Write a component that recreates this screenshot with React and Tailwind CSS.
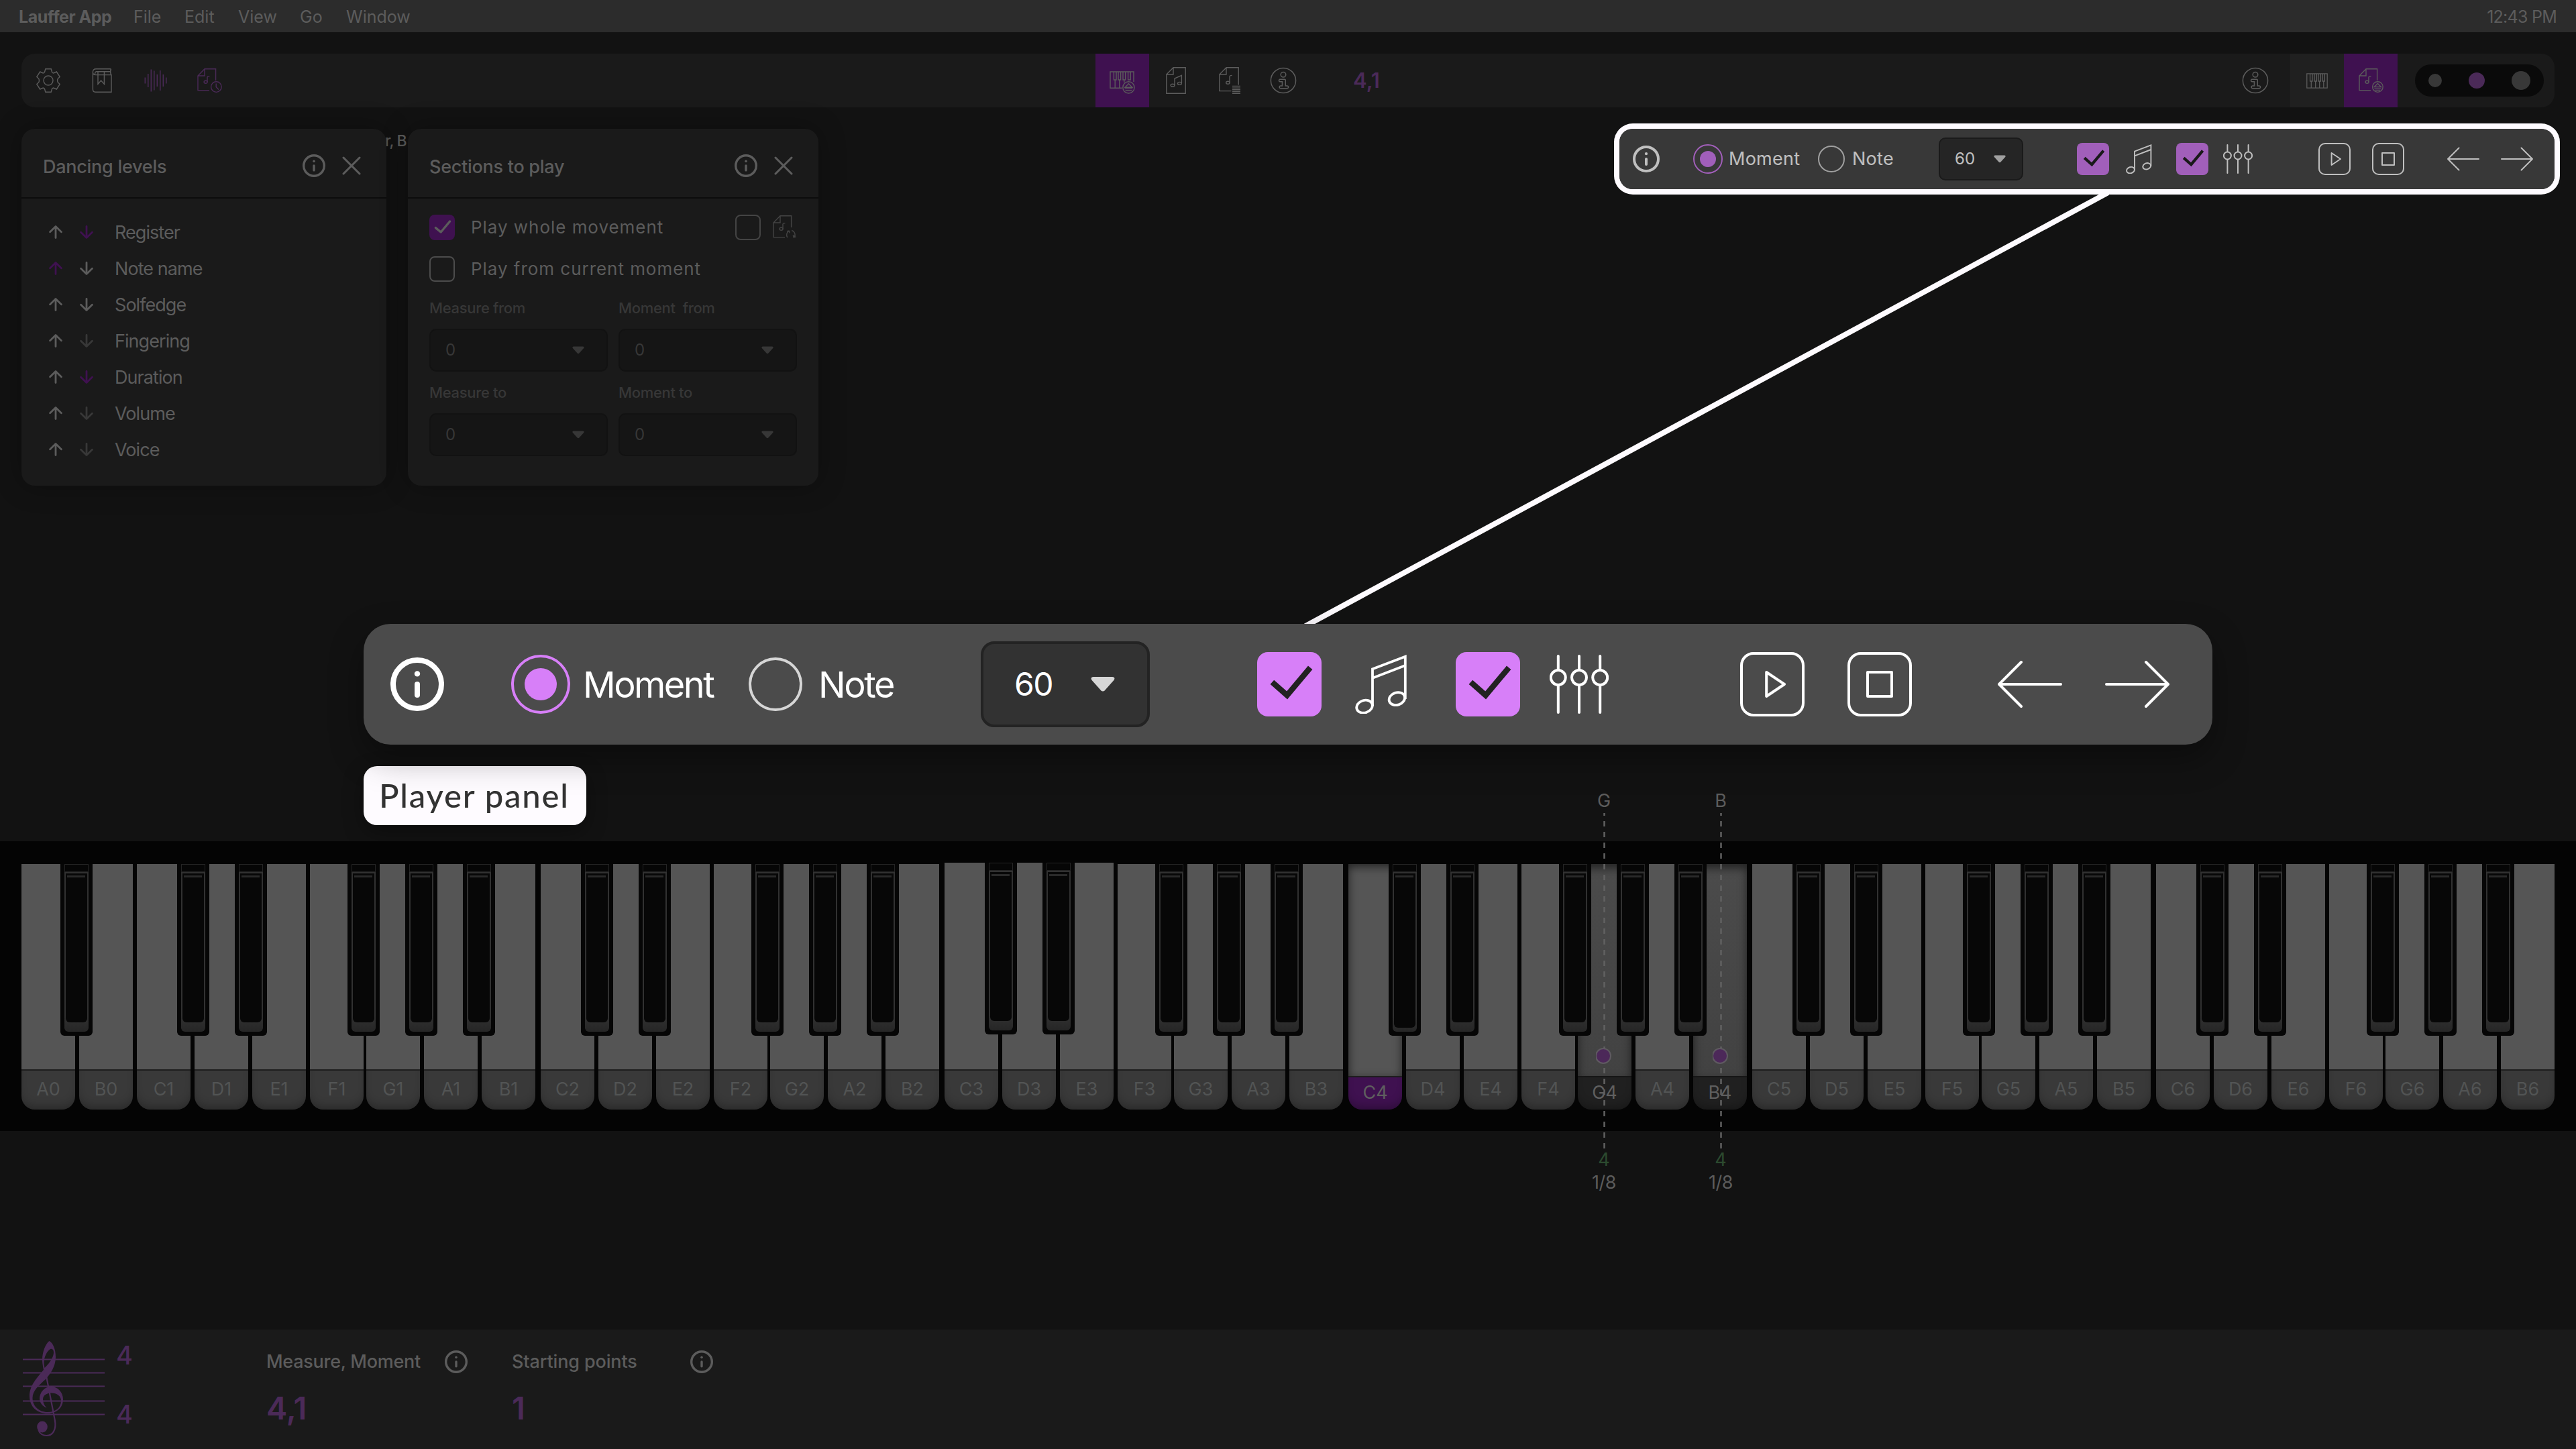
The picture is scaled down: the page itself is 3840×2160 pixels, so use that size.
import clsx from "clsx";

const levels = [
  { name: "Register", up: "text-[#5c5c5c]", down: "text-[#3f1150]" },
  { name: "Note name", up: "text-[#3f1150]", down: "text-[#5c5c5c]" },
  { name: "Solfedge", up: "text-[#5c5c5c]", down: "text-[#5c5c5c]" },
  { name: "Fingering", up: "text-[#5c5c5c]", down: "text-[#383838]" },
  { name: "Duration", up: "text-[#5c5c5c]", down: "text-[#3f1150]" },
  { name: "Volume", up: "text-[#5c5c5c]", down: "text-[#383838]" },
  { name: "Voice", up: "text-[#5c5c5c]", down: "text-[#383838]" },
];

// space after each white key
const keyMargin = { C: "mr-1.5", D: "mr-1.5", E: "mr-1.5", F: "mr-1", G: "mr-1.5", A: "mr-1.5", B: "mr-2" };
// where the sharp sits on the white key below it
const sharpLeft = { C: "left-[60px]", D: "left-[60px]", F: "left-[56px]", G: "left-[58px]", A: "left-[58px]" };

const pianoKeys = [
  { note: "A", octave: 0 },
  { note: "B", octave: 0 },
  ...[1, 2, 3, 4, 5, 6].flatMap((octave) => ["C", "D", "E", "F", "G", "A", "B"].map((note) => ({ note, octave }))),
];

/* ---------- Icons ---------- */

function Info({ className }) {
  return (
    <svg viewBox="0 0 40 40" className={clsx("shrink-0", className)} fill="none" stroke="currentColor" strokeWidth="4" strokeLinecap="round">
      <circle cx="20" cy="20" r="18" />
      <path d="M20 20v8" />
      <circle cx="20" cy="12.2" r="2.1" fill="currentColor" stroke="none" />
    </svg>
  );
}

function InfoOutline() {
  return (
    <svg viewBox="0 0 40 40" className="w-10 h-10" fill="none" stroke="currentColor" strokeWidth="1.5">
      <circle cx="20" cy="20" r="18.6" />
      <circle cx="20" cy="11.2" r="3.8" />
      <path d="M15 18.2h7a1.3 1.3 0 0 1 1.3 1.3v8.6h2.4a1.7 1.7 0 0 1 0 3.6H16a1.7 1.7 0 0 1 0-3.6h2.4v-6.4H15.5a1.7 1.7 0 0 1-.5-3.5z" />
    </svg>
  );
}

function Gear() {
  return (
    <svg viewBox="0 0 36 36" className="w-9 h-9" fill="none" stroke="currentColor" strokeWidth="1.4">
      <path d="M13.8.8H22.2L23.5 5.5Q24 6.6 25.8 7L30.3 5L35.2 12.5L32.2 15.3Q31 18 32.2 20.7L35.2 23.5L30.3 31L25.8 29Q24 29.4 23.5 30.5L22.2 35.2H13.8L12.5 30.5Q12 29.4 10.2 29L5.7 31L.8 23.5L3.8 20.7Q5 18 3.8 15.3L.8 12.5L5.7 5L10.2 7Q12 6.6 12.5 5.5Z" />
      <circle cx="18" cy="18" r="7" />
    </svg>
  );
}

function Book() {
  return (
    <svg viewBox="0 0 36 36" className="w-9 h-9" fill="none" stroke="currentColor" strokeWidth="1.4">
      <path d="M31.5.8H9Q4.4.8 4.4 5.5V31Q4.4 35.2 8 35.2H32V9.6H8.5Q4.8 9.6 4.4 6M31.5.8Q29.8 5 31.5 9.6M31 4.8H9.5Q7.6 5 7.4 9.4" />
      <path d="M12 4.8V23.4L16.6 18L21.4 23.4V4.8" />
    </svg>
  );
}

function Waves() {
  return (
    <svg viewBox="0 0 36 36" className="w-9 h-9" fill="none" stroke="currentColor" strokeWidth="1.5">
      <path d="M2.3 13.6v8.8M6.8 8v20M11.3 1.5v33M15.8 3.5v29M20.3 9v18M24.8 3v30M29.3 9v18M33.8 13.6v8.8" />
    </svg>
  );
}

// Score sheet with a badge in the lower right corner
function Sheet({ badge }) {
  return (
    <svg viewBox="0 0 36 36" className="w-9 h-9 overflow-visible" fill="none" stroke="currentColor" strokeWidth="1.4">
      <path d="M18 32.6H1V11L11 .8H27.6V18M1 11H11V.8" />
      <path d="M15 20V13.2Q15.2 11.6 18.4 11.6" />
      <ellipse cx="12.6" cy="20.2" rx="2.5" ry="2" />
      {badge === "clock" && (
        <>
          <circle cx="28.4" cy="27.6" r="7.8" />
          <path d="M28.2 22.6V27.6L32 31.6" />
        </>
      )}
      {badge === "eject" && (
        <>
          <circle cx="28.4" cy="27.6" r="7.8" />
          <path d="M28.4 22.6L33.4 27.6H23.4ZM23.4 30.4H33.4M24.8 32.4h7.2" />
        </>
      )}
      {badge === "loop" && (
        <path d="M20.2 33.4a6.6 6.6 0 0 1 2-9.4M19.6 24.2l3.4-.8M23 23.4l.4 3.4M26.6 22.9a6.6 6.6 0 0 1 4 9.8M32.8 32.4l-3.6.8M29.2 33.2l-.4-3.6" transform="translate(1.6 -.4)" />
      )}
    </svg>
  );
}

function SheetNotes() {
  return (
    <svg viewBox="0 0 30 40" className="w-[30px] h-10" fill="none" stroke="currentColor" strokeWidth="1.4">
      <path d="M.8 11L11 .8H29.2V39.2H.8ZM.8 11H11V.8" />
      <path d="M13 27V17L23.4 12.4V24" />
      <ellipse cx="10" cy="27.2" rx="2.9" ry="2" />
      <ellipse cx="20.4" cy="24.4" rx="2.9" ry="2" />
    </svg>
  );
}

function SheetList() {
  return (
    <svg viewBox="0 0 32 40" className="w-8 h-10" fill="none" stroke="currentColor" strokeWidth="1.4">
      <path d="M18.5 35.6H.8V11L11 .8H29.2V26.4M.8 11H11V.8" />
      <path d="M16 23V14Q16.2 12.4 19.6 12.4" />
      <ellipse cx="13.4" cy="23.2" rx="2.7" ry="2" />
      <path d="M20 28.4h12M20 31.1h12M20 33.8h12M20 36.5h12M20 39.2h12" />
    </svg>
  );
}

function Piano() {
  return (
    <svg viewBox="0 0 32 23" className="w-8 h-[23px]" fill="none" stroke="currentColor" strokeWidth="1.3">
      <path d="M.8.8H31.2V22.2H.8ZM5.6.8V12H9V.8M12 .8V12H15.4V.8M18 .8V12H21.4V.8M24.2 .8V12H27.4V.8M7.3 12V22M13.7 12V22M19.7 12V22M25.8 12V22" />
    </svg>
  );
}

function PianoEject() {
  return (
    <svg viewBox="0 0 38 34" className="w-[38px] h-[34px]" fill="none" stroke="currentColor" strokeWidth="1.4">
      <path d="M18.6 25.2H1V1H36V16M6.4 1V13H10V1M13 1V13H16.6V1M20 1V13H23.6V1M27.6 1V13H31.2V1M8.2 13V25M14.8 13V25M21.8 13V17" />
      <circle cx="28.4" cy="24.4" r="8.6" />
      <path d="M28.4 18.8L33.8 24.2H23ZM22.6 26.4H34.2M23.6 28.6H33.2" />
    </svg>
  );
}

function Close() {
  return (
    <svg viewBox="0 0 28 28" className="w-7 h-7" fill="none" stroke="currentColor" strokeWidth="3" strokeLinecap="round">
      <path d="M2 2L26 26M26 2L2 26" />
    </svg>
  );
}

function Arrow({ down, className }) {
  return (
    <svg viewBox="0 0 20 20" className={clsx("w-5 h-5", className)} fill="none" stroke="currentColor" strokeWidth="2.8" strokeLinecap="round" strokeLinejoin="round">
      {down ? <path d="M10 1.4V18.4M1.6 10.2L10 18.4L18.4 10.2" /> : <path d="M10 18.6V1.6M1.6 9.8L10 1.6L18.4 9.8" />}
    </svg>
  );
}

function Caret() {
  return (
    <svg viewBox="0 0 18 12" className="w-[18px] h-3" fill="currentColor">
      <path d="M2 .5H16Q18.6.8 17.2 3L10.4 10.6Q9 12 7.6 10.6L.8 3Q-.6.8 2 .5Z" />
    </svg>
  );
}

function LongArrow({ right, className }) {
  return (
    <svg viewBox="0 0 48 36" className={clsx("w-12 h-9 shrink-0", className)} fill="none" stroke="currentColor" strokeWidth="2" strokeLinecap="round" strokeLinejoin="round">
      {right ? <path d="M1 18H47M30.5 1.5L47 18L30.5 34.5" /> : <path d="M47 18H1M17.5 1.5L1 18L17.5 34.5" />}
    </svg>
  );
}

function Checked({ className }) {
  return (
    <div className={clsx("w-12 h-12 rounded-lg bg-[#d77ff8] shrink-0", className)}>
      <svg viewBox="0 0 48 48" className="w-12 h-12" fill="none" stroke="#222" strokeWidth="4.2">
        <path d="M11.2 22.4L22.3 32.2L39.6 11.6" />
      </svg>
    </div>
  );
}

/* ---------- Player ---------- */

function Player({ large }) {
  return (
    <div className={clsx("h-[90px] flex items-center rounded-[20px] bg-[#4b4b4b] text-white", large ? "w-[1378px] [zoom:2]" : "w-[1394px] opacity-75")}>
      <div className={clsx("flex items-center shrink-0 pl-5", large ? "w-[460px]" : "w-[476px]")}>
        <Info className="w-10 h-10" />
        <div className="ml-[50px] w-11 h-11 rounded-full border-2 border-[#d77ff8] flex items-center justify-center shrink-0">
          <div className="w-6 h-6 rounded-full bg-[#d77ff8]" />
        </div>
        <span className={clsx("text-[27px] shrink-0", large ? "ml-[9.5px] w-[123.5px] tracking-[-0.047em]" : "ml-[9px] w-[133px] tracking-[0.01em]")}>Moment</span>
        <div className="w-10 h-10 rounded-full border-2 border-[#d6d6d6] shrink-0" />
        <span className={clsx("text-[27px]", large ? "ml-3 tracking-[-0.045em]" : "ml-[11px] tracking-[0.01em]")}>Note</span>
      </div>
      <div className="w-[126px] h-16 rounded-[10px] bg-[#323232] border-2 border-[#232323] flex items-center justify-between pl-[22px] pr-6 shrink-0">
        <span className={clsx("text-2xl", large && "pl-px tracking-[-0.03em]")}>60</span>
        <span className="text-[#d6d6d6]">
          <Caret />
        </span>
      </div>
      <Checked className="ml-20" />
      <svg viewBox="0 0 40 44" className="ml-[25px] w-10 h-11 shrink-0" fill="none" stroke="currentColor" strokeWidth="1.9">
        <path d="M13 38.5V10.6L37.4 1.4V33M13 17.4L37.4 8" />
        <ellipse cx="7" cy="38.6" rx="6" ry="4.6" transform="rotate(-18 7 38.6)" />
        <ellipse cx="31.2" cy="32.8" rx="6" ry="4.6" transform="rotate(-18 31.2 32.8)" />
      </svg>
      <Checked className="ml-[35px]" />
      <svg viewBox="0 0 44 44" className="ml-[22px] w-11 h-11 shrink-0" fill="none" stroke="currentColor" strokeWidth="2" strokeLinecap="round">
        <path d="M6.4 1V11M6.4 23V43M22 1V11M22 23V43M37.6 1V11M37.6 23V43" />
        <circle cx="6.4" cy="17" r="5.5" />
        <circle cx="22" cy="17" r="5.5" />
        <circle cx="37.6" cy="17" r="5.5" />
      </svg>
      <div className="ml-[98px] w-12 h-12 rounded-[10px] border-2 border-white flex items-center justify-center shrink-0">
        <svg viewBox="0 0 44 44" className="w-11 h-11" fill="none" stroke="currentColor" strokeWidth="2" strokeLinejoin="round">
          <path d="M17.6 13L31 22L17.6 31Z" />
        </svg>
      </div>
      <div className="ml-8 w-12 h-12 rounded-[10px] border-2 border-white flex items-center justify-center shrink-0">
        <div className="w-5 h-5 border-2 border-white rounded-[1px]" />
      </div>
      <LongArrow className="ml-16" />
      <LongArrow right className="ml-8" />
    </div>
  );
}

/* ---------- Panels ---------- */

function Panel({ title, className, children }) {
  return (
    <div className={clsx("relative h-[532px] rounded-[20px] bg-[#1a1a1a] shadow-[0_0_40px_rgba(0,0,0,0.3)]", className)}>
      <div className="h-[104px] pt-2 pl-8 pr-[38px] flex items-center border-b-2 border-[#0c0c0c] text-[#5c5c5c]">
        <h2 className="pt-1 text-[27px] font-medium tracking-[-0.01em] mr-auto">{title}</h2>
        <Info className="w-[34px] h-[34px] mr-[25px]" />
        <Close />
      </div>
      {children}
    </div>
  );
}

function Field({ label }) {
  return (
    <div className="text-[#373737]">
      <div className="h-[66px] flex items-center text-[22px] font-medium tracking-[-0.015em] pb-1 whitespace-pre">{label}</div>
      <div className="w-[266px] h-16 -mt-1 rounded-[10px] bg-[#151515] border-2 border-[#121212] flex items-center justify-between pl-[22px] pr-[33px] text-2xl">
        <span>0</span>
        <Caret />
      </div>
    </div>
  );
}

/* ---------- Piano keys ---------- */

function BlackKey({ left, pressed }) {
  return (
    <div className={clsx("absolute z-10 top-0 w-12 h-64 rounded-b-md bg-[#060606] px-1.5 pb-1.5", left)}>
      <div className="h-3 border border-[#242424] bg-[#060606]" />
      <div className="h-[238px] rounded-b-md bg-linear-to-b from-[#313131] from-90% to-[#262626] px-0.5 pt-0.5">
        <div className={clsx("rounded-b-md bg-[#070707] pt-[3px] pl-0.5", pressed ? "h-[230px]" : "h-[222px]")}>
          <div className="w-[27px] h-[3px] bg-[#2a2a2a]" />
        </div>
      </div>
    </div>
  );
}

function WhiteKey({ note, octave }) {
  const name = note + octave;
  const played = name === "G4" || name === "B4";
  const root = name === "C4";
  const pressed = played || root;
  const raised = octave === 3 && (note === "C" || note === "D" || note === "E");

  return (
    <div className={clsx("relative w-20 flex flex-col shrink-0", raised ? "h-[368px] -mt-0.5" : "h-[366px]", octave === 0 ? "mr-1.5" : keyMargin[note])}>
      <div
        className={clsx(
          "flex-1",
          played && "bg-linear-to-b from-[#4b4b4b] to-[#424242] shadow-[inset_0_6px_14px_rgba(0,0,0,0.55)]",
          root && "bg-[#555] shadow-[inset_0_4px_14px_rgba(0,0,0,0.6)]",
          !pressed && "bg-[#555]"
        )}
      />
      <div
        className={clsx(
          "border-t-2 rounded-b-[20px] text-center text-[27px] shadow-[inset_0_-10px_14px_-6px_rgba(0,0,0,0.3)]",
          pressed ? "h-[50px] leading-[46px]" : "h-[60px] leading-[56px]",
          root && "bg-[#3f1150] border-[#1e1e1e] text-[#5f5f5f]",
          played && "bg-[#202020] border-[#161616] text-[#5f5f5f]",
          !pressed && "bg-[#393939] border-[#1e1e1e] text-[#525454]"
        )}
      >
        {name}
      </div>
      {sharpLeft[note] && <BlackKey left={sharpLeft[note]} pressed={name === "C4"} />}
    </div>
  );
}

// Dashed guide that runs through a played key
function NoteGuide({ note, className }) {
  return (
    <div className={clsx("absolute z-20 -top-[74px] w-20 flex flex-col items-center text-[27px] text-[#5c5c5c]", className)}>
      <span className="leading-7">{note}</span>
      <svg viewBox="0 0 24 500" className="mt-1 w-6 h-[500px]">
        <path d="M12.5 0V500" stroke="#616161" strokeWidth="2.5" strokeDasharray="8 8" strokeDashoffset="4" />
        <circle cx="11" cy="362" r="11" fill="#4c2859" stroke="#5f5a61" strokeWidth="2" />
      </svg>
      <span className="mt-[3px] leading-7 text-[#2c4a2f]">4</span>
      <span className="mt-1.5 leading-7 tracking-[-0.02em]">1/8</span>
    </div>
  );
}

export default function App() {
  return (
    <div className="relative w-[3840px] h-[2160px] overflow-hidden bg-[#121212] font-['Inter',sans-serif] flex flex-col">
      {/* Menu bar */}
      <div className="h-12 shrink-0 bg-[#2c2c2c] text-[#5c5c5c] text-[25px] flex items-center pl-7 pr-[29px] pt-1">
        <span className="font-bold tracking-[-0.02em] w-[171px]">Lauffer App</span>
        <span className="w-[76px]">File</span>
        <span className="w-20">Edit</span>
        <span className="w-[92px]">View</span>
        <span className="w-[69px]">Go</span>
        <span>Window</span>
        <span className="ml-auto tracking-[-0.03em]">12:43 PM</span>
      </div>

      {/* Toolbar */}
      <div className="mx-8 mt-8 h-20 shrink-0 rounded-[20px] bg-[#1a1a1a] text-[#5c5c5c] flex items-center">
        <div className="w-20 flex justify-center"><Gear /></div>
        <div className="w-20 flex justify-center"><Book /></div>
        <div className="w-20 flex justify-center text-[#4b2a58]"><Waves /></div>
        <div className="w-20 flex justify-center text-[#4b2a58]"><Sheet badge="clock" /></div>

        <div className="ml-[1281px] w-20 h-20 bg-[#3f1150] flex items-center justify-center pt-1.5"><PianoEject /></div>
        <div className="w-20 flex justify-center"><SheetNotes /></div>
        <div className="w-20 flex justify-center"><SheetList /></div>
        <div className="w-20 flex justify-center"><InfoOutline /></div>
        <div className="w-[168px] text-center text-[31px] font-semibold text-[#4b2a58]">4,1</div>

        <div className="ml-auto mr-8"><InfoOutline /></div>
        <div className="w-20 h-20 bg-[#202020] flex items-center justify-center"><Piano /></div>
        <div className="w-20 h-20 bg-[#3f1150] flex items-center justify-center"><Sheet badge="eject" /></div>
        <div className="ml-[26px] mr-4 w-48 h-12 rounded-3xl bg-[#0a0a0a] flex items-center justify-between pl-5 pr-5">
          <div className="w-5 h-5 rounded-full bg-[#383838]" />
          <div className="w-6 h-6 rounded-full bg-[#4b2a58]" />
          <div className="w-7 h-7 rounded-full bg-[#383838]" />
        </div>
      </div>

      {/* Panels and player */}
      <div className="relative mx-8 mt-8 flex items-start shrink-0">
        <span className="absolute left-[542px] top-1 text-[23px] font-medium text-[#5c5c5c] leading-7 tracking-[-0.04em]">r, B</span>

        <Panel title="Dancing levels" className="w-[544px]">
          <div className="pt-[23px] pl-[41px]">
            {levels.map((level) => (
              <div key={level.name} className="h-[54px] flex items-center">
                <Arrow className={level.up} />
                <Arrow down className={clsx("ml-[26px]", level.down)} />
                <span className="ml-[32px] pt-0.5 text-[27px] tracking-[-0.035em] text-[#5c5c5c]">{level.name}</span>
              </div>
            ))}
          </div>
        </Panel>

        <Panel title="Sections to play" className="ml-8 w-[612px]">
          <div className="px-8 pt-6 text-[26px] text-[#5c5c5c] tracking-[0.037em]">
            <div className="h-[38px] flex items-center">
              <div className="w-[38px] h-[38px] rounded-lg bg-[#3f1150]">
                <svg viewBox="0 0 38 38" className="w-[38px] h-[38px]" fill="none" stroke="currentColor" strokeWidth="3.4" strokeLinecap="round" strokeLinejoin="round">
                  <path d="M9.4 19.6L17.2 26L30.6 10" />
                </svg>
              </div>
              <span className="ml-6 pb-px">Play whole movement</span>
              <div className="ml-auto w-[38px] h-[38px] rounded-lg border-2 border-[#444]" />
              <div className="ml-[18px] text-[#444]"><Sheet badge="loop" /></div>
            </div>
            <div className="mt-6 h-[38px] flex items-center">
              <div className="w-[38px] h-[38px] rounded-lg border-2 border-[#4c4c4c]" />
              <span className="ml-6 pb-0.5">Play from current moment</span>
            </div>
          </div>
          <div className="mt-2 px-8 grid grid-cols-[266px_266px] gap-x-4">
            <Field label="Measure from" />
            <Field label="Moment  from" />
            <Field label="Measure to" />
            <Field label="Moment to" />
          </div>
        </Panel>

        <div className="ml-auto rounded-[20px] bg-black ring-8 ring-[#fefbff]">
          <Player />
        </div>
      </div>

      {/* Connector between the player and its enlarged copy */}
      <svg viewBox="0 0 1200 640" className="absolute left-[1944px] top-[290px] w-[1200px] h-[640px]">
        <path d="M-6 647.5L1208 -8" stroke="#fefbff" strokeWidth="8" />
      </svg>

      {/* Enlarged player */}
      <div className="relative ml-[542px] mt-[206px] w-[2756px] h-[180px] shrink-0 rounded-[40px] shadow-[0_20px_50px_rgba(0,0,0,0.35)]">
        <Player large />
      </div>
      <div className="ml-[542px] mt-8 w-[332px] h-[88px] shrink-0 rounded-[20px] bg-[#fefbff] text-[#333] text-[49px] font-medium font-['Lato',sans-serif] tracking-[0.037em] leading-[86px] pl-[23px] whitespace-nowrap shadow-[0_10px_30px_rgba(0,0,0,0.35)]">
        Player panel
      </div>

      {/* Piano */}
      <div className="relative mt-6 h-[432px] shrink-0 bg-[#040404] pt-[34px] pl-8 flex items-start">
        {pianoKeys.map((key) => (
          <WhiteKey key={key.note + key.octave} note={key.note} octave={key.octave} />
        ))}
        <NoteGuide note="G" className="left-[2351px]" />
        <NoteGuide note="B" className="left-[2525px]" />
      </div>

      {/* Footer */}
      <div className="mt-auto h-[178px] shrink-0 bg-[#1a1a1a] flex text-[#5c5c5c]">
        <svg viewBox="0 0 130 160" className="ml-8 mt-2.5 w-[130px] h-40 shrink-0 text-[#4b2a58]" fill="currentColor">
          <path d="M2 34.6H124M2 54.6H124M2 74.6H124M2 96.6H124M2 116.6H124" stroke="currentColor" strokeWidth="2" />
          <g transform="translate(12 7)">
            <path
              fillRule="evenodd"
              d="M29.5 0C24 4 19 16 19 28C19 33 20 38 21 43C12 54 0 66 0 82C0 98 11 108 27 108C41 108 50 99 50 87C50 76 42 68 32 68C22 68 15 77 15 86C15 92 20 98 25.5 99.5C22 96 20 92 20 87C20 81 26 77.5 32 77.5C41 77.5 47 82 47 89C47 100 38 106 27 106C14 106 4.5 97 4.5 85C4.5 74 14 66 24 57C33 47 39 36 39 24C39 12 35 3 29.5 0ZM31 12C26 15 21.5 24 21.5 32C21.5 35 22 38 22.6 40C30 33 36 24 36 17C36 13 34 11 31 12Z"
            />
            <path d="M23 42L37.8 118C40.5 133 34 141 25.5 141C20 141 15 138 13.5 133" fill="none" stroke="currentColor" strokeWidth="2.2" />
            <ellipse cx="19" cy="128" rx="7.8" ry="8.4" />
          </g>
        </svg>
        <div className="ml-[11px] pt-[18px] w-[224px] text-[38px] font-medium text-[#4b2a58] leading-[40px]">
          <div>4</div>
          <div className="mt-12">4</div>
        </div>
        <div className="w-[366px] pt-[31px]">
          <div className="h-[34px] flex items-center">
            <span className="w-[266px] text-[27px] font-medium tracking-[-0.01em]">Measure, Moment</span>
            <Info className="w-[34px] h-[34px]" />
          </div>
          <div className="mt-[22px] text-[47px] font-semibold text-[#4b2a58] leading-[60px]">4,1</div>
        </div>
        <div className="pt-[31px]">
          <div className="h-[34px] flex items-center">
            <span className="w-[266px] text-[27px] font-medium tracking-[-0.005em]">Starting points</span>
            <Info className="w-[34px] h-[34px]" />
          </div>
          <div className="mt-[22px] text-[47px] font-semibold text-[#4b2a58] leading-[60px]">1</div>
        </div>
      </div>
    </div>
  );
}
